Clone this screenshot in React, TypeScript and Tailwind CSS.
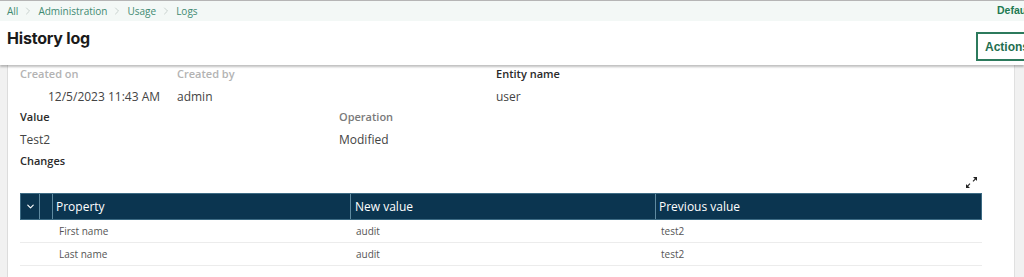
import { ChevronDown, ChevronRight } from 'lucide-react';

const crumbs = ['All', 'Administration', 'Usage', 'Logs'];

const rows = [
  { property: 'First name', newValue: 'audit', previous: 'test2' },
  { property: 'Last name', newValue: 'audit', previous: 'test2' },
];

function ExpandIcon() {
  return (
    <svg width="13" height="13" viewBox="0 0 13 13" className="text-[#222]">
      <path d="M8 1h4v4l-1.4-1.4-2.2 2.2-0.8-0.8 2.2-2.2z" fill="currentColor" />
      <path d="M5 12H1V8l1.4 1.4 2.2-2.2 0.8 0.8-2.2 2.2z" fill="currentColor" />
    </svg>
  );
}

export default function App() {
  return (
    <div className="w-[1024px] h-[277px] overflow-hidden bg-white font-['Open_Sans',sans-serif] text-[#333]">
      {/* Breadcrumb */}
      <div className="flex items-center h-[21px] border-t border-[#b5b5b5] bg-[#f3f8f6] pl-[7px] pr-0">
        <div className="flex items-center gap-[4px] text-[10px] text-[#3f8a72]">
          {crumbs.map((c, i) => (
            <div key={c} className="flex items-center gap-[4px]">
              {i > 0 && <ChevronRight className="w-[12px] h-[12px] text-[#b9c4c0]" strokeWidth={1.5} />}
              <span>{c}</span>
            </div>
          ))}
        </div>
        <span className="ml-auto text-[10.5px] font-bold text-[#1e7a52] whitespace-nowrap w-[27px] overflow-hidden font-['Liberation_Sans',sans-serif]">Default</span>
      </div>

      {/* Header */}
      <div className="flex items-start h-[44px] bg-white pl-[7px] shadow-[0_2px_2px_rgba(0,0,0,0.25)] relative z-10">
        <h1 className="mt-[5px] text-[16px] font-bold text-[#1a1a1a] tracking-[-0.2px] font-['Inter',sans-serif]">History log</h1>
        <div className="ml-auto mt-[11px] w-[48px] overflow-hidden">
          <button className="h-[29px] pl-[7px] pr-[10px] border-2 border-[#2c7a5c] text-[12px] font-bold text-[#1e6e50] whitespace-nowrap font-['Liberation_Sans',sans-serif]">
            Actions
          </button>
        </div>
      </div>

      {/* Body */}
      <div className="flex h-[212px]">
        <div className="w-[8px] bg-[#f1f1f1] border-r border-[#dcdcdc]" />
        <div className="flex-1 pl-[12px] pr-[32px] pt-[2px]">
          <div className="flex text-[11px] leading-[14px] font-semibold text-[#b3b3b3]">
            <div className="w-[157px]">Created on</div>
            <div className="w-[319px]">Created by</div>
            <div className="text-[#2a2a2a]">Entity name</div>
          </div>
          <div className="flex mt-[8px] text-[12px] leading-[16px] text-[#444]">
            <div className="w-[157px] pl-[28px]">12/5/2023 11:43 AM</div>
            <div className="w-[319px]">admin</div>
            <div>user</div>
          </div>
          <div className="flex mt-[5px] text-[11px] leading-[14px] font-semibold">
            <div className="w-[319px] text-[#2a2a2a]">Value</div>
            <div className="text-[#7a7a7a]">Operation</div>
          </div>
          <div className="flex mt-[8px] text-[12px] leading-[16px] text-[#444]">
            <div className="w-[319px]">Test2</div>
            <div>Modified</div>
          </div>
          <div className="mt-[6px] text-[11px] leading-[14px] font-semibold text-[#2a2a2a]">Changes</div>

          <div className="flex justify-end h-[24px] pt-[8px] pr-[4px]">
            <ExpandIcon />
          </div>

          <div className="mt-[1px]">
            <div className="flex h-[27px] bg-[#0b3550] text-white text-[12px] border border-[#3d6b84]">
              <div className="w-[19px] flex items-center justify-center border-r border-[#5f8aa0]">
                <ChevronDown className="w-[11px] h-[11px]" strokeWidth={2.5} />
              </div>
              <div className="w-[13px] border-r border-[#5f8aa0]" />
              <div className="w-[298px] flex items-center pl-[3px] border-r border-[#5f8aa0]">Property</div>
              <div className="w-[305px] flex items-center pl-[4px] border-r border-[#5f8aa0]">New value</div>
              <div className="flex-1 flex items-center pl-[3px]">Previous value</div>
            </div>
            {rows.map((r) => (
              <div key={r.property} className="flex h-[23px] pt-[1px] items-center text-[10px] text-[#555] border-b border-[#ececec]">
                <div className="w-[33px]" />
                <div className="w-[298px] pl-[6px]">{r.property}</div>
                <div className="w-[305px] pl-[5px]">{r.newValue}</div>
                <div className="flex-1 pl-[5px]">{r.previous}</div>
              </div>
            ))}
          </div>
        </div>
        <div className="w-[10px] bg-[#f1f1f1] border-l border-[#e0e0e0]" />
      </div>
    </div>
  );
}
